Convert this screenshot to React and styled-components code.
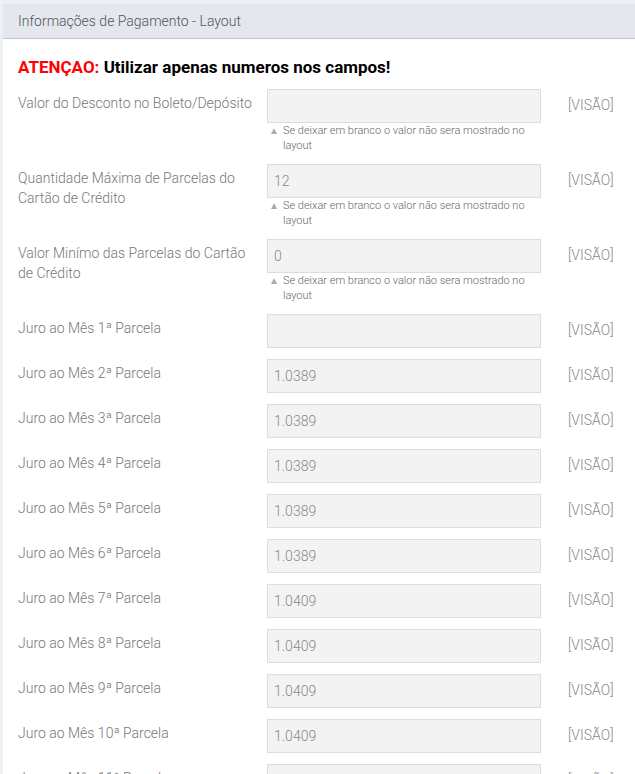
import React from 'react';
import styled, { createGlobalStyle } from 'styled-components';

const GlobalStyle = createGlobalStyle`
    body {
        margin: 0;
        background: #edf0f4;
        font-family: Roboto, "Liberation Sans", sans-serif;
    }
`;

const Page = styled.div`
    padding: 4px 0 0 3px;
`;

const Panel = styled.div`
    background: #fff;
`;

const PanelHeader = styled.div`
    height: 34px;
    line-height: 34px;
    padding: 0 15px;
    background: #e4e7ee;
    border-bottom: 1px solid #c3c6cc;
    color: #555;
    font-size: 14px;
    font-weight: 300;
`;

const PanelBody = styled.div`
    padding: 17px 15px 0 15px;
`;

const Warning = styled.div`
    font-size: 17px;
    font-weight: 700;
    line-height: 22px;
    color: #000;
    margin-bottom: 11px;

    span {
        color: #f00;
    }
`;

const Row = styled.div`
    display: grid;
    grid-template-columns: 234px 274px auto;
    column-gap: 15px;
    margin-bottom: 11px;
`;

const Label = styled.label`
    padding-top: 4px;
    font-size: 14px;
    font-weight: 300;
    line-height: 20px;
    color: #777;
`;

const Field = styled.div`
    display: flex;
    flex-direction: column;
`;

const Input = styled.input`
    box-sizing: border-box;
    width: 274px;
    height: 34px;
    padding: 0 6px;
    border: 1px solid #ddd;
    background: #f3f3f3;
    color: #888;
    font-family: Roboto, "Liberation Sans", sans-serif;
    font-size: 14px;
    font-weight: 300;
    outline: none;
`;

const Help = styled.div`
    display: flex;
    gap: 4px;
    padding: 0 12px 0 2px;
    font-size: 11px;
    font-weight: 300;
    line-height: 15px;
    color: #666;

    i {
        font-style: normal;
        font-size: 10px;
        color: #aaa;
    }
`;

const View = styled.div`
    padding: 6px 0 0 12px;
    font-size: 14px;
    font-weight: 300;
    line-height: 20px;
    color: #888;
`;

const HELP = 'Se deixar em branco o valor não sera mostrado no layout';

const rows = [
    { label: 'Valor do Desconto no Boleto/Depósito', value: '', help: true },
    { label: 'Quantidade Máxima de Parcelas do Cartão de Crédito', value: '12', help: true },
    { label: 'Valor Minímo das Parcelas do Cartão de Crédito', value: '0', help: true },
    { label: 'Juro ao Mês 1ª Parcela', value: '' },
    { label: 'Juro ao Mês 2ª Parcela', value: '1.0389' },
    { label: 'Juro ao Mês 3ª Parcela', value: '1.0389' },
    { label: 'Juro ao Mês 4ª Parcela', value: '1.0389' },
    { label: 'Juro ao Mês 5ª Parcela', value: '1.0389' },
    { label: 'Juro ao Mês 6ª Parcela', value: '1.0389' },
    { label: 'Juro ao Mês 7ª Parcela', value: '1.0409' },
    { label: 'Juro ao Mês 8ª Parcela', value: '1.0409' },
    { label: 'Juro ao Mês 9ª Parcela', value: '1.0409' },
    { label: 'Juro ao Mês 10ª Parcela', value: '1.0409' },
    { label: 'Juro ao Mês 11ª Parcela', value: '1.0409' },
    { label: 'Juro ao Mês 12ª Parcela', value: '1.0409' },
];

const App = () => (
    <Page>
        <GlobalStyle />
        <Panel>
            <PanelHeader>Informações de Pagamento - Layout</PanelHeader>
            <PanelBody>
                <Warning><span>ATENÇAO:</span> Utilizar apenas numeros nos campos!</Warning>
                {rows.map((r, i) => (
                    <Row key={i}>
                        <Label>{r.label}</Label>
                        <Field>
                            <Input defaultValue={r.value} />
                            {r.help && (
                                <Help><i>▲</i><div>{HELP}</div></Help>
                            )}
                        </Field>
                        <View>[VISÃO]</View>
                    </Row>
                ))}
            </PanelBody>
        </Panel>
    </Page>
);

export default App;
